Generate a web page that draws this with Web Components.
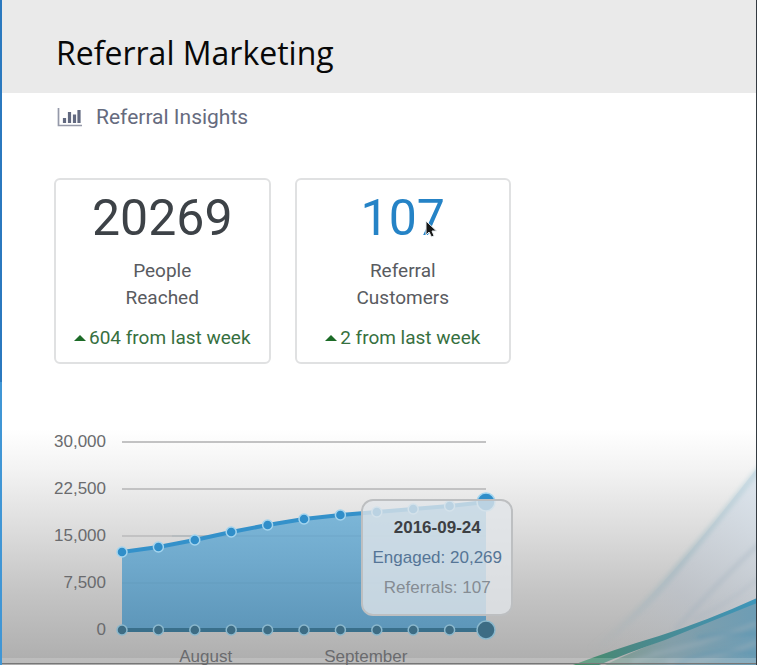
<!DOCTYPE html>
<html lang="en">
<head>
<meta charset="utf-8">
<meta name="viewport" content="width=device-width, initial-scale=1">
<title>Referral Marketing</title>
<style>
html, body { margin: 0; }
body { font-family: Roboto, "Liberation Sans", sans-serif; color: #595b5f; background: #fff; }
</style>
</head>
<body>
<referral-page></referral-page>
<script>
class ShadowElement extends HTMLElement {
  connectedCallback() {
    if (this.shadowRoot) return;
    this.attachShadow({ mode: 'open' }).innerHTML = this.render();
  }
}

customElements.define('page-header', class extends ShadowElement {
  render() {
    return `<style>
      :host { display: block; background: #eaeaea; padding: 31px 54px 18px; }
      h1 { margin: 0; font: 400 32px/44px "Open Sans", "Noto Sans", sans-serif; color: #080808; }
    </style><h1><slot></slot></h1>`;
  }
});

customElements.define('section-title', class extends ShadowElement {
  render() {
    return `<style>
      :host { display: block; padding-left: 3px; }
      h2 { display: flex; align-items: center; gap: 13px; margin: 0; font-size: 21px; line-height: 28px; font-weight: 400; color: #666b7e; }
      svg { width: 26px; height: 20px; }
    </style>
    <h2><svg viewBox="0 0 26 20" aria-hidden="true">
      <path d="M1.5 1v17.5H25" fill="none" stroke="#9599a9" stroke-width="1.7"/>
      <path d="M7.5 16v-5M12.5 16V5M17.5 16V7.500M22 16V3" fill="none" stroke="#626980" stroke-width="3.2"/>
    </svg><span><slot></slot></span></h2>`;
  }
});

customElements.define('stat-card', class extends ShadowElement {
  render() {
    return `<style>
      :host { display: flex; flex-direction: column; align-items: center; box-sizing: border-box; border: 2px solid #e0e1e2; border-radius: 6px; background: #fff; padding: 8px 8px 11px; text-align: center; }
      .value { font-size: 50px; line-height: 60px; color: var(--value-color, #3d4247); }
      .label { width: min-content; margin-top: 9px; font-size: 19px; line-height: 27px; }
      .change { display: flex; align-items: center; gap: 3px; margin-top: 14px; font-size: 19px; line-height: 26px; color: #37703f; white-space: nowrap; }
      svg { width: 12px; height: 6px; }
    </style>
    <div class="value"><slot name="value"></slot></div>
    <div class="label"><slot></slot></div>
    <div class="change"><svg viewBox="0 0 12 6" aria-hidden="true"><path d="M0 6 6 0l6 6z" fill="#1c6b27"/></svg><slot name="change"></slot></div>`;
  }
});

customElements.define('chart-tooltip', class extends ShadowElement {
  render() {
    return `<style>
      :host { display: block; box-sizing: border-box; border: 2px solid #bdbfc1; border-radius: 12px; background: rgba(225, 229, 233, .78); padding: 12px 9px 11px; text-align: center; font-size: 17px; line-height: 30px; white-space: nowrap; color: #858c93; }
      .date { font-weight: 700; color: #3d4043; }
      .engaged { color: #557596; }
    </style>
    <div class="date"><slot></slot></div>
    <div class="engaged"><slot name="engaged"></slot></div>
    <div><slot name="referrals"></slot></div>`;
  }
});

customElements.define('engagement-chart', class extends ShadowElement {
  render() {
    const engaged = [78, 83, 90, 98, 105, 111, 115, 118, 121, 124, 128];
    const step = 364 / 10;
    const top = engaged.map((v, i) => [i * step, 188 - v]);
    const line = top.map(p => p.join(' ')).join('L');
    const dots = (points, fill, stroke) => points.map(([x, y], i) =>
      `<circle cx="${x}" cy="${y}" r="${i === 10 ? 9 : 5}" fill="${fill}" stroke="${stroke}" stroke-width="1.5"/>`).join('');
    const grid = [0, 47, 94, 141].map(y => `<path d="M0 ${y}H364"/>`).join('');
    return `<style>
      :host { display: grid; grid-template-columns: 52px 1fr; column-gap: 16px; row-gap: 19px; font: 17px/20px "Liberation Sans", Arial, sans-serif; color: #6a6b6e; }
      .axis { display: flex; flex-direction: column; justify-content: space-between; margin: -10px 0; text-align: right; }
      .plot { position: relative; }
      svg { display: block; width: 100%; overflow: visible; }
      .months { grid-column: 2; display: grid; grid-template-columns: 46% 42%; line-height: 16px; text-align: center; }
      ::slotted(chart-tooltip) { position: absolute; right: -27px; top: 57px; }
    </style>
    <div class="axis"><span>30,000</span><span>22,500</span><span>15,000</span><span>7,500</span><span>0</span></div>
    <div class="plot">
      <svg viewBox="0 0 364 188" role="img" aria-label="People engaged and referrals per week">
        <defs><linearGradient id="area" x1="0" y1="0" x2="0" y2="1">
          <stop offset="0" stop-color="#7fb9da"/><stop offset=".45" stop-color="#70aacd"/><stop offset="1" stop-color="#5d96b9"/>
        </linearGradient></defs>
        <g stroke="#c2c2c3" stroke-width="2">${grid}</g>
        <path d="M${line}V188H0z" fill="url(#area)"/>
        <path d="M50 94H364M0 141H364" stroke="#5687a5" stroke-opacity=".2"/>
        <path d="M${line}" fill="none" stroke="#3491ca" stroke-width="4"/>
        ${dots(top, '#308ec9', '#a3d4ee')}
        <path d="M0 188H364" stroke="#396f8b" stroke-width="4"/>
        ${dots(top.map(([x]) => [x, 188]), '#3d6c84', '#8bb8cd')}
      </svg>
      <slot></slot>
    </div>
    <div class="months"><span>August</span><span>September</span></div>`;
  }
});

customElements.define('wave-backdrop', class extends ShadowElement {
  render() {
    return `<style>
      :host { display: block; background: linear-gradient(#fff 0, #f3f3f3 17%, #ddd 42%, #c6c6c6 67%, #adadad 100%); }
      svg { position: absolute; right: 0; bottom: 0; width: 190px; height: 205px; }
      .rule { position: absolute; left: 0; right: 0; bottom: 1px; height: 5px; background: rgba(255, 255, 255, .18); border-bottom: 1px solid #777; }
    </style>
    <svg viewBox="0 0 190 205" aria-hidden="true">
      <defs>
        <linearGradient id="veil" x1="1" y1="0" x2=".2" y2="1"><stop stop-color="#dbe5ee" stop-opacity=".9"/><stop offset=".6" stop-color="#b9c0c9" stop-opacity=".6"/><stop offset="1" stop-color="#b1b5b9" stop-opacity="0"/></linearGradient>
        <linearGradient id="ribbon"><stop offset="0" stop-color="#438d65"/><stop offset=".3" stop-color="#4b8884"/><stop offset=".7" stop-color="#458fa4"/><stop offset="1" stop-color="#3e96ba"/></linearGradient>
        <linearGradient id="sea"><stop offset="0" stop-color="#7f9a8e"/><stop offset=".45" stop-color="#839faa"/><stop offset="1" stop-color="#6d9db5"/></linearGradient>
        <linearGradient id="edge" x1="1" y1="0" x2="0" y2="1"><stop stop-color="#b3d2dc" stop-opacity=".5"/><stop offset=".5" stop-color="#9ab5be" stop-opacity=".5"/><stop offset="1" stop-color="#9aadb3" stop-opacity="0"/></linearGradient>
        <filter id="soft"><feGaussianBlur stdDeviation="2"/></filter>
      </defs>
      <path d="M190 8Q125 92 86 133Q50 171 15 205L190 142z" fill="url(#veil)"/>
      <g filter="url(#soft)">
        <path d="M192 4Q130 82 86 130Q48 170 18 190L35 190Q75 156 100 126Q140 78 192 14z" fill="url(#edge)"/>
        <path d="M192 84Q155 118 108 170" fill="none" stroke="#9dabb9" stroke-opacity=".3" stroke-width="5"/>
        <path d="M192 118Q160 145 126 160" fill="none" stroke="#9dabb9" stroke-opacity=".2" stroke-width="4"/>
      </g>
      <path d="M190 140Q130 165 90 182Q52 198 38 205H190z" fill="url(#sea)"/>
      <g fill="none" filter="url(#soft)">
        <path d="M85 194Q130 187 190 163M100 202Q145 202 190 182M65 202Q100 190 138 182" stroke="#9db0b9" stroke-opacity=".5" stroke-width="4"/>
        <path d="M130 178Q160 172 190 174M108 205Q145 187 190 194" stroke="#508fae" stroke-opacity=".35" stroke-width="4"/>
      </g>
      <path d="M190 138Q142 160 92 176Q48 189 6 205H32Q60 193 98 180Q145 161 190 143z" fill="url(#ribbon)"/>
    </svg>
    <div class="rule"></div>`;
  }
});

customElements.define('mouse-pointer', class extends ShadowElement {
  render() {
    return `<style>:host { display: block; width: 12px; height: 19px; } svg { display: block; }</style>
    <svg width="12" height="19" viewBox="0 0 12 19" aria-hidden="true"><path d="M1 1v14l3-3 2.500 5 2.500-1.200L7 11h4.500z" fill="#171717" stroke="#e8eef2" stroke-width="1"/></svg>`;
  }
});

customElements.define('referral-page', class extends ShadowElement {
  render() {
    return `<style>
      :host { display: block; position: relative; box-sizing: border-box; min-height: 100vh; overflow: hidden; border-right: 1px solid #343b41; border-left: 2px solid; border-image: linear-gradient(#2b79bf 0 382px, #4096d5 382px) 0 0 0 2 / 0 0 0 2px; }
      .frame { position: absolute; inset: 0 0 0 auto; width: 1px; background: #343b41; }
      wave-backdrop { position: absolute; left: 0; right: 0; bottom: 0; height: 236px; }
      main { position: relative; padding: 10px 52px 0; }
      .cards { display: grid; grid-template-columns: 1fr 1fr; gap: 24px; max-width: 457px; margin-top: 47px; }
      stat-card.active { --value-color: #2583c6; }
      .value { position: relative; }
      mouse-pointer { position: absolute; right: 8px; top: 31px; }
      engagement-chart { max-width: 432px; margin-top: 78px; }
    </style>
    <wave-backdrop></wave-backdrop>
    <page-header>Referral Marketing</page-header>
    <main>
      <section-title>Referral Insights</section-title>
      <div class="cards">
        <stat-card><span slot="value">20269</span>People Reached<span slot="change">604 from last week</span></stat-card>
        <stat-card class="active"><span slot="value" class="value">107<mouse-pointer></mouse-pointer></span>Referral Customers<span slot="change">2 from last week</span></stat-card>
      </div>
      <engagement-chart>
        <chart-tooltip>2016-09-24<span slot="engaged">Engaged: 20,269</span><span slot="referrals">Referrals: 107</span></chart-tooltip>
      </engagement-chart>
    </main>
    <div class="frame"></div>`;
  }
});
</script>
</body>
</html>
